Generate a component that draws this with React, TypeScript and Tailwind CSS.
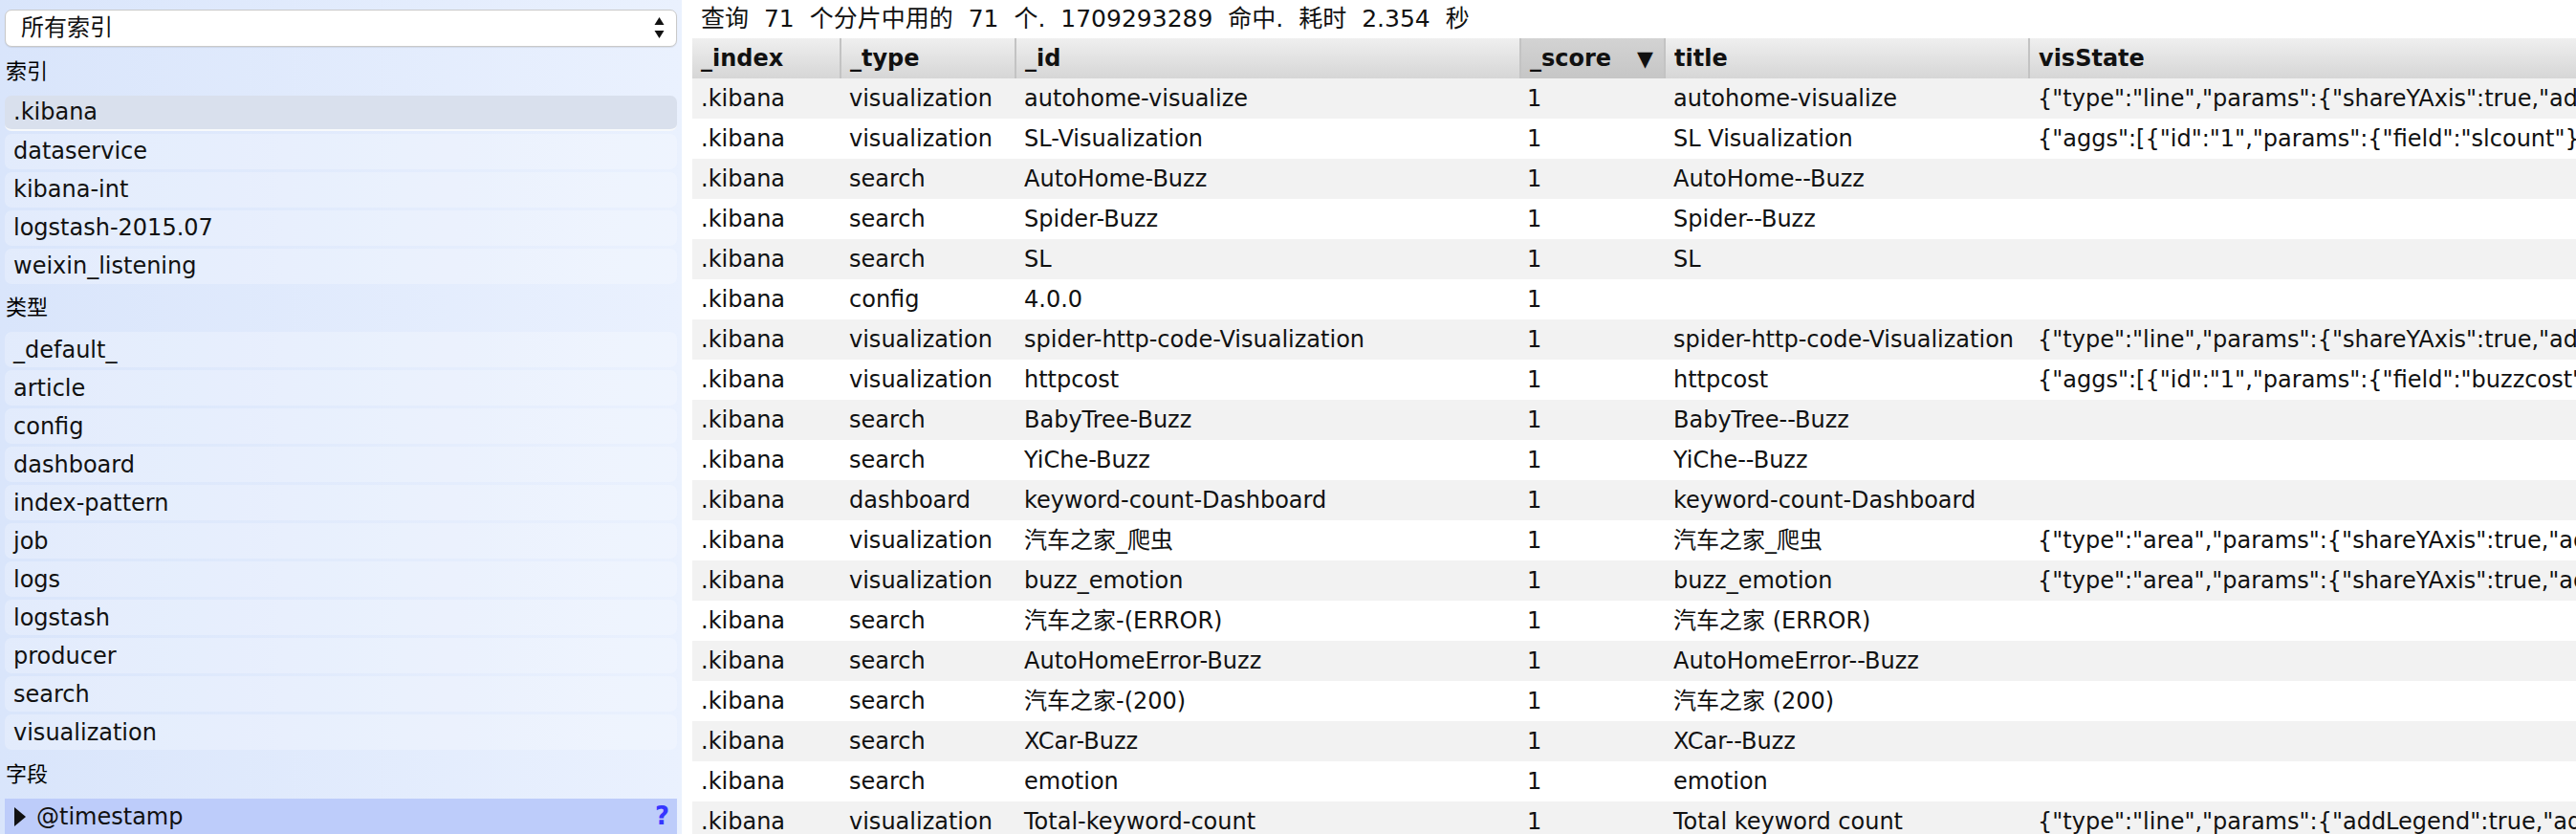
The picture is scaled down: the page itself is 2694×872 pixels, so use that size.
const font = "font-['DejaVu_Sans','Noto_Sans_CJK_SC',sans-serif]"

const indices = ['.kibana', 'dataservice', 'kibana-int', 'logstash-2015.07', 'weixin_listening']
const types = ['_default_', 'article', 'config', 'dashboard', 'index-pattern', 'job', 'logs', 'logstash', 'producer', 'search', 'visualization']

const lineVis = '{"type":"line","params":{"shareYAxis":true,"addTooltip":true,"addLegend":true}}'
const areaVis = '{"type":"area","params":{"shareYAxis":true,"addTooltip":true,"addLegend":true}}'

const rows: [string, string, string, string][] = [
  ['visualization', 'autohome-visualize', 'autohome-visualize', lineVis],
  ['visualization', 'SL-Visualization', 'SL Visualization', '{"aggs":[{"id":"1","params":{"field":"slcount"},"schema":"metric"}]}'],
  ['search', 'AutoHome-Buzz', 'AutoHome--Buzz', ''],
  ['search', 'Spider-Buzz', 'Spider--Buzz', ''],
  ['search', 'SL', 'SL', ''],
  ['config', '4.0.0', '', ''],
  ['visualization', 'spider-http-code-Visualization', 'spider-http-code-Visualization', lineVis],
  ['visualization', 'httpcost', 'httpcost', '{"aggs":[{"id":"1","params":{"field":"buzzcost"},"schema":"metric"}]}'],
  ['search', 'BabyTree-Buzz', 'BabyTree--Buzz', ''],
  ['search', 'YiChe-Buzz', 'YiChe--Buzz', ''],
  ['dashboard', 'keyword-count-Dashboard', 'keyword-count-Dashboard', ''],
  ['visualization', '汽车之家_爬虫', '汽车之家_爬虫', areaVis],
  ['visualization', 'buzz_emotion', 'buzz_emotion', areaVis],
  ['search', '汽车之家-(ERROR)', '汽车之家 (ERROR)', ''],
  ['search', 'AutoHomeError-Buzz', 'AutoHomeError--Buzz', ''],
  ['search', '汽车之家-(200)', '汽车之家 (200)', ''],
  ['search', 'XCar-Buzz', 'XCar--Buzz', ''],
  ['search', 'emotion', 'emotion', ''],
  ['visualization', 'Total-keyword-count', 'Total keyword count', '{"type":"line","params":{"addLegend":true,"addTooltip":true}}'],
]

function SectionLabel({ children }: { children: string }) {
  return <div className="flex h-[51px] items-center pl-[1px] text-[22px] text-black">{children}</div>
}

function Item({ label, active }: { label: string; active?: boolean }) {
  return (
    <div
      className={
        active
          ? 'flex h-[37px] items-center rounded-[7px] border-b-2 border-white/80 bg-[#d9e0ed] pl-[9px] text-[24px] text-[#111]'
          : 'flex h-[37px] items-center rounded-[7px] bg-[#ffffff]/25 pl-[9px] text-[24px] text-[#111]'
      }
    >
      {label}
    </div>
  )
}

function Sidebar() {
  return (
    <aside className="flex w-[713px] shrink-0 flex-col bg-gradient-to-r from-[#d9e5fb] to-[#eaf1fe] px-[5px] pt-[10px]">
      <div className="flex h-[39px] items-center justify-between rounded-[7px] border border-[#c9c9c9] bg-white pl-[16px] pr-[12px] text-[24px] text-[#111] shadow-[0_1px_1px_rgba(0,0,0,0.08)]">
        <span>所有索引</span>
        <svg width="11" height="24" viewBox="0 0 11 24">
          <path d="M5.5 1 L10.5 9 L0.5 9 Z" fill="#111" />
          <path d="M5.5 23 L10.5 15 L0.5 15 Z" fill="#111" />
        </svg>
      </div>

      <SectionLabel>索引</SectionLabel>
      <div className="flex flex-col gap-[3px]">
        {indices.map((name, i) => (
          <Item key={name} label={name} active={i === 0} />
        ))}
      </div>

      <SectionLabel>类型</SectionLabel>
      <div className="flex flex-col gap-[3px]">
        {types.map((name) => (
          <Item key={name} label={name} />
        ))}
      </div>

      <SectionLabel>字段</SectionLabel>
      <div className="flex h-[37px] items-center justify-between bg-[#bdccfa] pl-[9px] pr-[8px] text-[24px] text-[#111]">
        <div className="flex items-center gap-[10px]">
          <svg width="14" height="22" viewBox="0 0 14 22">
            <path d="M1 1 L13 11 L1 21 Z" fill="#111" />
          </svg>
          <span>@timestamp</span>
        </div>
        <span className="text-[26px] font-bold text-[#3535ff]">?</span>
      </div>
    </aside>
  )
}

function HeadCell({ children, sorted, first }: { children: React.ReactNode; sorted?: boolean; first?: boolean }) {
  const base = 'h-[42px] px-[9px] text-left align-middle text-[24px] font-bold text-[#111]'
  const bg = sorted ? ' bg-gradient-to-b from-[#d3d3d3] to-[#c6c6c6]' : ' bg-gradient-to-b from-[#efefef] to-[#d6d6d6]'
  const edge = first ? '' : ' border-l-2 border-l-[#c3c3c3]'
  return <th className={base + bg + edge}>{children}</th>
}

const cell = 'overflow-hidden whitespace-nowrap px-[9px] text-[24px] text-[#111]'

function ResultTable() {
  return (
    <main className="flex min-w-0 flex-1 flex-col overflow-hidden bg-white pl-[11px]">
      <div className="flex h-[40px] shrink-0 items-center whitespace-nowrap pl-[9px] text-[25px] text-[#111] [word-spacing:8px]">
        查询 71 个分片中用的 71 个. 1709293289 命中. 耗时 2.354 秒
      </div>
      <table className="w-[2600px] table-fixed border-collapse">
        <colgroup>
          <col className="w-[155px]" />
          <col className="w-[183px]" />
          <col className="w-[528px]" />
          <col className="w-[151px]" />
          <col className="w-[381px]" />
          <col />
        </colgroup>
        <thead>
          <tr>
            <HeadCell first>_index</HeadCell>
            <HeadCell>_type</HeadCell>
            <HeadCell>_id</HeadCell>
            <HeadCell sorted>
              <div className="flex items-center justify-between pr-[2px]">
                <span>_score</span>
                <span className="text-[22px]">▼</span>
              </div>
            </HeadCell>
            <HeadCell>title</HeadCell>
            <HeadCell>visState</HeadCell>
          </tr>
        </thead>
        <tbody>
          {rows.map(([type, id, title, vis], i) => (
            <tr key={id} className={i % 2 === 0 ? 'bg-[#f2f2f2]' : 'bg-white'}>
              <td className={cell + ' h-[42px]'}>.kibana</td>
              <td className={cell}>{type}</td>
              <td className={cell}>{id}</td>
              <td className="overflow-hidden whitespace-nowrap pl-[7px] text-[24px] text-[#111]">1</td>
              <td className={cell}>{title}</td>
              <td className={cell}>{vis}</td>
            </tr>
          ))}
        </tbody>
      </table>
    </main>
  )
}

export default function App() {
  return (
    <div className={'flex h-[872px] w-[2694px] overflow-hidden bg-white ' + font}>
      <Sidebar />
      <ResultTable />
    </div>
  )
}
